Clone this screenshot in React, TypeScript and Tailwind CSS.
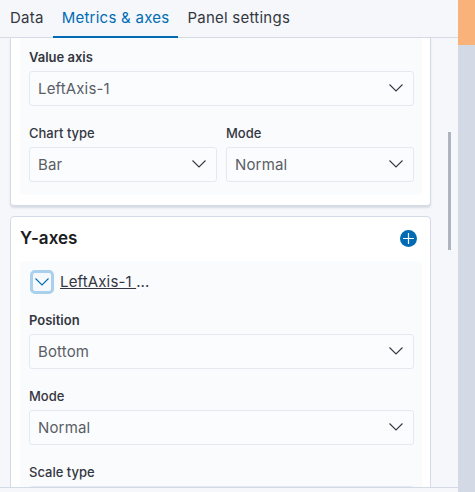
const Chevron = ({ className }: { className?: string }) => (
  <svg width="14" height="8" viewBox="0 0 14 8" fill="none" className={className}>
    <path d="M0.5 0.5L7 7L13.5 0.5" stroke="currentColor" strokeWidth="1.1" />
  </svg>
);

const Field = ({ label, value, strong, className }: { label: string; value: string; strong?: boolean; className?: string }) => (
  <div className={className}>
    <div className={`mb-1 text-[13px] leading-[20px] text-[#343741] ${strong ? "font-semibold" : "font-medium"}`}>{label}</div>
    <div className="flex h-[34.5px] items-center justify-between rounded-[3px] border border-[#e6e8f0] bg-[#fbfcfd] pl-2 pr-[10px] text-[15px] tracking-[0.15px] text-[#5a5e66]">
      <span className="pt-px">{value}</span>
      <Chevron className="text-[#343741]" />
    </div>
  </div>
);

export default function App() {
  return (
    <div className="relative flex h-[492px] w-[475px] overflow-hidden bg-[#f5f7fa] font-['Inter',sans-serif]">
      <div className="flex w-[458px] flex-col">
        <div className="flex h-[38px] shrink-0 border-b border-[#d3dae6] text-[15px] tracking-[0.25px]">
          <div className="flex items-center pl-[10px] pr-[9px] text-[#343741]">Data</div>
          <div className="-mb-px flex items-center border-b-2 border-[#006bb4] px-[9px] text-[#006bb4]">Metrics &amp; axes</div>
          <div className="flex items-center px-[9px] text-[#343741]">Panel settings</div>
        </div>

        <div className="flex-1 overflow-hidden pl-[10px] pr-[27px]">
          <div className="rounded-b-[4px] border border-t-0 border-[#d3dae6] bg-white pb-[10px] pl-[9px] pr-[8px] shadow-[0_2px_2px_rgba(152,162,179,0.3)]">
            <div className="rounded-b-[4px] bg-[#fafbfd] pb-[13.5px] pl-[9px] pr-[8px] pt-[9px]">
              <Field label="Value axis" value="LeftAxis-1" strong />
              <div className="mt-[17.5px] flex gap-[9px]">
                <Field label="Chart type" value="Bar" className="flex-1" />
                <Field label="Mode" value="Normal" className="flex-1" />
              </div>
            </div>
          </div>

          <div className="mt-[10px] rounded-t-[4px] border border-[#d3dae6] bg-white pl-[9px] pr-[8px]">
            <div className="flex h-[44px] items-center justify-between pr-[5px]">
              <span className="text-[17px] font-semibold text-[#1a1c21]">Y-axes</span>
              <span className="mb-px flex h-[17px] w-[17px] items-center justify-center rounded-full bg-[#006bb4]">
                <svg width="11" height="11" viewBox="0 0 11 11" fill="none">
                  <path d="M5.5 0V11M0 5.5H11" stroke="white" strokeWidth="1.2" />
                </svg>
              </span>
            </div>
            <div className="rounded-t-[4px] bg-[#fafbfd] pl-[9px] pr-[8px] pt-[9px]">
              <div className="flex items-center gap-[6px] pl-px">
                <span className="flex h-[24px] w-[24px] items-center justify-center rounded-[5px] border-[3px] border-[#a9d0ec] bg-[#f5f9fc]">
                  <Chevron className="text-[#006bb4]" />
                </span>
                <span className="text-[15px] tracking-[0.15px] text-[#343741]">
                  <span className="underline">LeftAxis-1 </span>
                  <span>...</span>
                </span>
              </div>
              <Field label="Position" value="Bottom" strong className="mt-[16px]" />
              <Field label="Mode" value="Normal" className="mt-[17.5px]" />
              <Field label="Scale type" value="" className="mt-[17px]" />
            </div>
          </div>
        </div>

        <div className="h-[5px] shrink-0 border-t border-[#d3dae6] bg-[#f5f7fa]" />
      </div>

      <div className="flex w-[17px] flex-col bg-[#d3dae6]">
        <div className="h-[45px] bg-[#f9b27a]" />
      </div>

      {/* scrollbar thumb */}
      <div className="absolute left-[448px] top-[132px] h-[118px] w-[3px] bg-[#aeb4bd]" />
    </div>
  );
}
